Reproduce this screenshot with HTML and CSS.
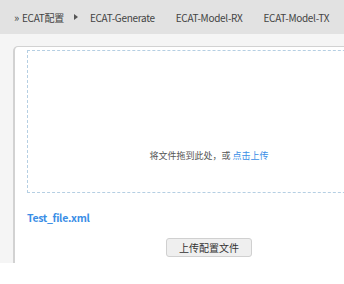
FILE: index.html
```html
<!DOCTYPE html>
<html lang="zh">
<head>
  <meta charset="UTF-8">
  <meta name="viewport" content="width=device-width, initial-scale=1.0">
  <title>ECAT配置</title>
  <link rel="stylesheet" href="styles.css">
</head>
<body>
  <div class="tabs">
    <span class="tab tab-home"><span class="chev">&raquo;</span>ECAT配置</span>
    <span class="arrow"></span>
    <span class="tab">ECAT-Generate</span>
    <span class="tab">ECAT-Model-RX</span>
    <span class="tab">ECAT-Model-TX</span>
  </div>

  <div class="content">
    <div class="card">
      <div class="dropzone">
        <div class="drop-text">将文件拖到此处，或 <em>点击上传</em></div>
      </div>
      <div class="file-name">Test_file.xml</div>
      <div class="actions">
        <button class="btn">上传配置文件</button>
      </div>
    </div>
  </div>
</body>
</html>
```

FILE: styles.css
```css
body {
  margin: 0;
  font-family: "Noto Sans CJK SC", "Noto Sans", sans-serif;
  background: #fff;
  color: #333;
  overflow: hidden;
}
.tabs {
  height: 34px;
  background: #e2e2e2;
  display: flex;
  align-items: center;
  padding-left: 14px;
  font-size: 10px;
  letter-spacing: -0.3px;
  color: #444;
  white-space: nowrap;
}
.tab {
  margin-right: 21px;
}
.tab-home {
  margin-right: 10px;
}
.chev {
  font-size: 11px;
  margin-right: 3px;
}
.arrow {
  width: 0;
  height: 0;
  border-left: 4px solid #555;
  border-top: 3px solid transparent;
  border-bottom: 3px solid transparent;
  margin-right: 12px;
}
.content {
  background: #f5f5f5;
  padding: 12px 0 0 13px;
  height: 229px;
  box-sizing: border-box;
  overflow: hidden;
}
.card {
  width: 392px;
  height: 217px;
  box-sizing: border-box;
  background: #fff;
  border: 1px solid #d2d2d2;
  border-left-width: 2px;
  border-bottom: none;
  border-radius: 5px 0 0 0;
  padding: 3px 0 0 12px;
}
.dropzone {
  width: 364px;
  height: 143px;
  box-sizing: border-box;
  border: 1px dashed #b5cfe3;
  padding-top: 99px;
  text-align: center;
  font-size: 9px;
  line-height: 12px;
  color: #555;
}
.drop-text em {
  font-style: normal;
  color: #3a8ee6;
}
.file-name {
  margin-top: 17px;
  font-size: 10.5px;
  letter-spacing: -0.3px;
  line-height: 15px;
  font-weight: bold;
  color: #3a8ee6;
}
.actions {
  width: 364px;
  text-align: center;
  margin-top: 8px;
}
.btn {
  width: 86px;
  height: 19px;
  padding: 0;
  background: #efefef;
  border: 1px solid #d0d0d0;
  border-radius: 3px;
  font-family: inherit;
  font-size: 10px;
  color: #333;
}
```
